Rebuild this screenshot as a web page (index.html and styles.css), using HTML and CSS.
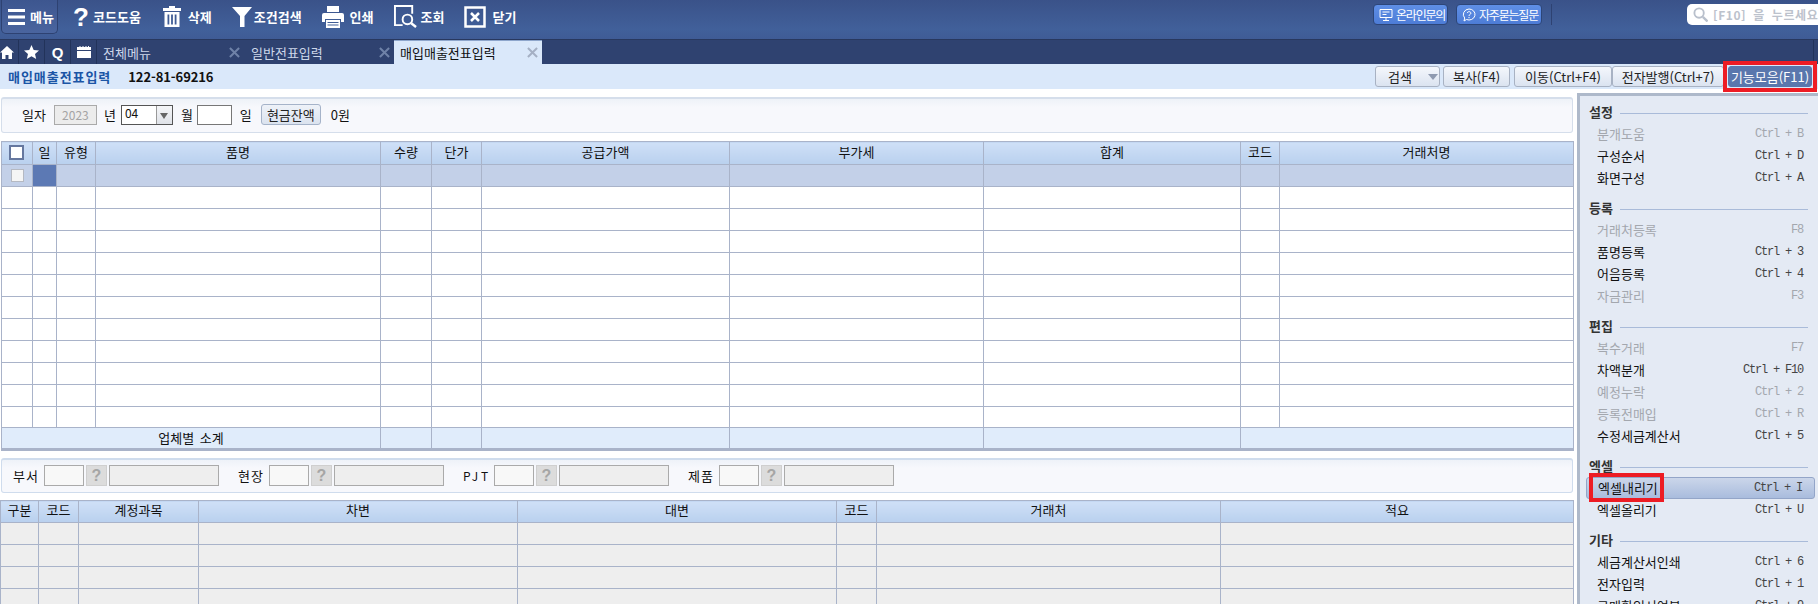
FILE: index.html
```html
<!DOCTYPE html>
<html lang="ko">
<head>
<meta charset="utf-8">
<title>매입매출전표입력</title>
<link rel="stylesheet" href="styles.css">
</head>
<body>
<header class="toolbar">
  <button class="menu-btn"><svg class="ic-ham" viewBox="0 0 17 16"><path d="M0 0h17v3H0zM0 6.500h17v3H0zM0 13h17v3H0z"/></svg><span>메뉴</span></button>
  <nav class="tools">
    <a class="tool tool-help"><span class="qmark">?</span><span>코드도움</span></a>
    <a class="tool"><svg class="ic-trash" viewBox="0 0 18 21"><path d="M6 0h6v2h6v3H0V2h6zM1.500 6h15v15h-15zM4.500 8.500v10h1.800v-10zM8.100 8.500v10h1.800v-10zM11.700 8.500v10h1.800v-10z" fill-rule="evenodd"/></svg><span>삭제</span></a>
    <a class="tool tool-narrow"><svg class="ic-funnel" viewBox="0 0 20 20"><path d="M0 0h20l-7.500 9v11h-4.500V9z"/></svg><span>조건검색</span></a>
    <a class="tool tool-print"><svg class="ic-print" viewBox="0 0 22 22"><path d="M5 0h12v6H5zM2 7h18a2 2 0 0 1 2 2v7h-3v-3H3v3H0V9a2 2 0 0 1 2-2zM4 14h14v8H4zM5.500 16v1h11v-1zM5.500 18.500v1h11v-1z" fill-rule="evenodd"/></svg><span>인쇄</span></a>
    <a class="tool tool-find"><svg class="ic-find" viewBox="0 0 24 24"><path d="M9 21H1V1h18v8" fill="none" stroke="#fff" stroke-width="2"/><circle cx="14" cy="15" r="5" fill="none" stroke="#fff" stroke-width="2"/><path d="M18 19l5 4" stroke="#fff" stroke-width="2.500"/></svg><span>조회</span></a>
    <a class="tool tool-print"><svg class="ic-close" viewBox="0 0 22 22"><path d="M1.500 1.500h19v19h-19z" fill="none" stroke="#fff" stroke-width="2.500"/><path d="M7 7l8 8M15 7l-8 8" stroke="#fff" stroke-width="2.500"/></svg><span>닫기</span></a>
  </nav>
  <div class="top-right">
    <a class="pill pill-a"><svg class="ic-pill" viewBox="0 0 14 14"><path d="M1 1.500h12v8H1zM7 9.500v2.500M4 12.500h6M3.500 4h7M3.500 6.500h4" fill="none" stroke="#fff"/></svg><span>온라인문의</span></a>
    <a class="pill"><svg class="ic-pill" viewBox="0 0 14 14"><path d="M7 1a6 5.500 0 1 1-2.500 10.500L2 13l.7-3A6 5.500 0 0 1 7 1z" fill="none" stroke="#fff"/><path d="M5.300 5a1.800 1.500 0 1 1 2.600 1.500c-.6.400-.9.700-.9 1.500M7 9v1.200" fill="none" stroke="#fff"/></svg><span>자주묻는질문</span></a>
    <span class="top-div"></span>
    <div class="global-search"><svg class="ic-mag" viewBox="0 0 16 16"><circle cx="6.500" cy="6.500" r="5" fill="none" stroke="#b9c0cc" stroke-width="2"/><path d="M10.500 10.500l5 5" stroke="#b9c0cc" stroke-width="2.500"/></svg><span>[F10] 을 누르세요</span></div>
  </div>
</header>

<div class="tabbar">
  <a class="tab-ic ti-1"><svg class="ic-home" viewBox="0 0 14 13"><path d="M7 0l7 6.500h-2V13H8.500V9h-3v4H2V6.500H0z"/></svg></a>
  <a class="tab-ic"><svg class="ic-star" viewBox="0 0 15 14"><path d="M7.500 0l2.200 4.900 5.300.5-4 3.500 1.200 5.100-4.700-2.700L2.800 14 4 8.900 0 5.400l5.300-.5z"/></svg></a>
  <a class="tab-ic tab-q">Q</a>
  <a class="tab-ic"><svg class="ic-cal" viewBox="0 0 14 12"><path d="M0 1h2.500V0h1v1h2V0h1v1h2V0h1v1h1.500V0h1v1H14v3H0zM0 5h14v7H0z"/></svg></a>
  <div class="tab tab-all"><span>전체메뉴</span><svg class="x" viewBox="0 0 12 12"><path d="M1 1l10 10M11 1L1 11"/></svg></div>
  <div class="tab tab-gen"><span>일반전표입력</span><svg class="x" viewBox="0 0 12 12"><path d="M1 1l10 10M11 1L1 11"/></svg></div>
  <div class="tab tab-on"><span>매입매출전표입력</span><svg class="x" viewBox="0 0 12 12"><path d="M1 1l10 10M11 1L1 11"/></svg></div>
  <span class="tab-end"></span>
</div>

<div class="subhead">
  <strong class="page-title">매입매출전표입력</strong>
  <strong class="biz-no">122-81-69216</strong>
  <div class="sub-actions">
    <button class="sbtn sbtn-search"><span>검색</span><i class="tri"></i></button>
    <button class="sbtn sbtn-copy">복사(F4)</button>
    <button class="sbtn sbtn-move">이동(Ctrl+F4)</button>
    <button class="sbtn sbtn-issue">전자발행(Ctrl+7)</button>
    <button class="sbtn sbtn-all">기능모음(F11)<i class="red-mark"></i></button>
  </div>
</div>

<main class="body">
  <section class="work">
    <div class="panel filter">
      <label class="lb-date">일자</label>
      <span class="inp inp-year">2023</span>
      <label class="lb-y">년</label>
      <span class="sel"><span class="sel-v">04</span><i class="sel-a"></i></span>
      <label class="lb-m">월</label>
      <span class="inp inp-day"></span>
      <label class="lb-d">일</label>
      <button class="cash">현금잔액</button>
      <span class="cash-v">0원</span>
    </div>

    <table class="grid grid-top">
      <colgroup><col class="a1"><col class="a2"><col class="a3"><col class="a4"><col class="a5"><col class="a6"><col class="a7"><col class="a8"><col class="a9"><col class="a10"><col class="a11"></colgroup>
      <thead><tr><th><i class="chk-h"></i></th><th>일</th><th>유형</th><th>품명</th><th>수량</th><th>단가</th><th>공급가액</th><th>부가세</th><th>합계</th><th>코드</th><th>거래처명</th></tr></thead>
      <tbody>
        <tr class="sel-row"><td><i class="chk"></i></td><td class="cur"></td><td></td><td></td><td></td><td></td><td></td><td></td><td></td><td></td><td></td></tr>
        <tr><td></td><td></td><td></td><td></td><td></td><td></td><td></td><td></td><td></td><td></td><td></td></tr>
        <tr><td></td><td></td><td></td><td></td><td></td><td></td><td></td><td></td><td></td><td></td><td></td></tr>
        <tr><td></td><td></td><td></td><td></td><td></td><td></td><td></td><td></td><td></td><td></td><td></td></tr>
        <tr><td></td><td></td><td></td><td></td><td></td><td></td><td></td><td></td><td></td><td></td><td></td></tr>
        <tr><td></td><td></td><td></td><td></td><td></td><td></td><td></td><td></td><td></td><td></td><td></td></tr>
        <tr><td></td><td></td><td></td><td></td><td></td><td></td><td></td><td></td><td></td><td></td><td></td></tr>
        <tr><td></td><td></td><td></td><td></td><td></td><td></td><td></td><td></td><td></td><td></td><td></td></tr>
        <tr><td></td><td></td><td></td><td></td><td></td><td></td><td></td><td></td><td></td><td></td><td></td></tr>
        <tr><td></td><td></td><td></td><td></td><td></td><td></td><td></td><td></td><td></td><td></td><td></td></tr>
        <tr><td></td><td></td><td></td><td></td><td></td><td></td><td></td><td></td><td></td><td></td><td></td></tr>
        <tr class="short-row"><td></td><td></td><td></td><td></td><td></td><td></td><td></td><td></td><td></td><td></td><td></td></tr>
        <tr class="sum-row"><td colspan="4">업체별 소계</td><td></td><td></td><td></td><td></td><td></td><td colspan="2"></td></tr>
      </tbody>
    </table>

    <div class="panel refs">
      <label class="r-lb r-lb1">부서</label><span class="r-in"></span><span class="r-q">?</span><span class="r-wide"></span>
      <label class="r-lb">현장</label><span class="r-in"></span><span class="r-q">?</span><span class="r-wide"></span>
      <label class="r-lb r-lb3">PJT</label><span class="r-in"></span><span class="r-q">?</span><span class="r-wide"></span>
      <label class="r-lb">제품</label><span class="r-in"></span><span class="r-q">?</span><span class="r-wide"></span>
    </div>

    <table class="grid grid-bottom">
      <colgroup><col class="b1"><col class="b2"><col class="b3"><col class="b4"><col class="b5"><col class="b6"><col class="b7"><col class="b8"></colgroup>
      <thead><tr><th>구분</th><th>코드</th><th>계정과목</th><th>차변</th><th>대변</th><th>코드</th><th>거래처</th><th>적요</th></tr></thead>
      <tbody>
        <tr><td></td><td></td><td></td><td></td><td></td><td></td><td></td><td></td></tr>
        <tr><td></td><td></td><td></td><td></td><td></td><td></td><td></td><td></td></tr>
        <tr><td></td><td></td><td></td><td></td><td></td><td></td><td></td><td></td></tr>
        <tr><td></td><td></td><td></td><td></td><td></td><td></td><td></td><td></td></tr>
      </tbody>
    </table>
  </section>

  <aside class="func">
    <h3 class="fh"><span>설정</span><i></i></h3>
    <div class="fi off"><span>분개도움</span><kbd>Ctrl + B</kbd></div>
    <div class="fi"><span>구성순서</span><kbd>Ctrl + D</kbd></div>
    <div class="fi"><span>화면구성</span><kbd>Ctrl + A</kbd></div>
    <h3 class="fh"><span>등록</span><i></i></h3>
    <div class="fi off"><span>거래처등록</span><kbd>F8</kbd></div>
    <div class="fi"><span>품명등록</span><kbd>Ctrl + 3</kbd></div>
    <div class="fi"><span>어음등록</span><kbd>Ctrl + 4</kbd></div>
    <div class="fi off"><span>자금관리</span><kbd>F3</kbd></div>
    <h3 class="fh"><span>편집</span><i></i></h3>
    <div class="fi off"><span>복수거래</span><kbd>F7</kbd></div>
    <div class="fi"><span>차액분개</span><kbd>Ctrl + F10</kbd></div>
    <div class="fi off"><span>예정누락</span><kbd>Ctrl + 2</kbd></div>
    <div class="fi off"><span>등록전매입</span><kbd>Ctrl + R</kbd></div>
    <div class="fi"><span>수정세금계산서</span><kbd>Ctrl + 5</kbd></div>
    <h3 class="fh"><span>엑셀</span><i></i></h3>
    <div class="fi hot"><span>엑셀내리기</span><kbd>Ctrl + I</kbd><i class="red-box"></i></div>
    <div class="fi"><span>엑셀올리기</span><kbd>Ctrl + U</kbd></div>
    <h3 class="fh"><span>기타</span><i></i></h3>
    <div class="fi"><span>세금계산서인쇄</span><kbd>Ctrl + 6</kbd></div>
    <div class="fi"><span>전자입력</span><kbd>Ctrl + 1</kbd></div>
    <div class="fi"><span>구매확인서여부</span><kbd>Ctrl + 9</kbd></div>
  </aside>
</main>
</body>
</html>
```

FILE: styles.css
```css
* { box-sizing: border-box; }
html, body { margin: 0; padding: 0; height: 604px; overflow: hidden; background: #fff; }
body { font-family: "Noto Sans CJK KR", "Noto Sans", sans-serif; font-size: 13px; color: #111; line-height: 1; }
button { font: inherit; padding: 0; margin: 0; }
i { font-style: normal; }
svg { display: block; flex: none; fill: #fff; }

/* toolbar */
.toolbar { height: 40px; display: flex; align-items: flex-start; background: linear-gradient(#3a5289, #41609a 75%, #3f5b95); border-bottom: 1px solid #28385f; color: #fff; }
.menu-btn { width: 57px; height: 34px; margin-left: 1px; display: flex; align-items: center; gap: 5px; padding: 0 0 0 6px; color: #fff; font-weight: 700; font-size: 13px; border: 1px solid #2e4272; border-top: 0; border-radius: 0 0 5px 5px; background: linear-gradient(#3d568f, #4a659f); }
.ic-ham { width: 17px; height: 16px; }
.tools { display: flex; margin-left: 15px; gap: 20px; height: 33px; align-items: center; }
.tool { display: flex; align-items: center; gap: 7px; font-weight: 700; font-size: 13px; }
.tool-narrow { gap: 2px; }
.tool-print { gap: 6px; }
.tool-find { gap: 4px; }
.tool-help { gap: 6px; margin-right: 2px; }
.qmark { font-family: "Liberation Sans", sans-serif; font-size: 26px; width: 14px; text-align: center; }
.ic-trash { width: 18px; height: 21px; }
.ic-funnel { width: 20px; height: 20px; }
.ic-print { width: 22px; height: 22px; }
.ic-find { width: 23px; height: 23px; }
.ic-close { width: 22px; height: 22px; }
.top-right { margin-left: auto; height: 30px; padding-top: 4px; display: flex; align-items: flex-start; }
.pill { height: 21px; width: 86px; display: flex; align-items: center; gap: 3px; padding-left: 5px; border: 1px solid #2d4679; border-radius: 4px; background: linear-gradient(#5f8fe6, #4d7cd6); font-size: 12px; color: #fff; }
.pill span { letter-spacing: -1.2px; white-space: nowrap; }
.pill-a { width: 75px; margin-right: 8px; }
.ic-pill { width: 14px; height: 14px; fill: none; }
.top-div { width: 1px; height: 21px; margin-left: 9px; margin-right: 135px; background: #2e4272; }
.global-search { width: 131px; height: 21px; display: flex; align-items: center; gap: 5px; padding-left: 6px; border-radius: 5px 0 0 5px; background: #fff; color: #bcc2cc; font-weight: 700; font-size: 12px; letter-spacing: .6px; word-spacing: 3px; white-space: nowrap; overflow: hidden; }
.ic-mag { width: 15px; height: 15px; fill: none; }

/* tabs */
.tabbar { height: 24px; display: flex; align-items: stretch; background: #2f4270; color: #fff; }
.tab-ic { width: 26px; display: flex; align-items: center; justify-content: center; border-right: 1px solid #22335a; }
.ti-1 { width: 19px; justify-content: flex-start; }
.ic-home { width: 14px; height: 13px; }
.ic-star { width: 15px; height: 14px; }
.ic-cal { width: 14px; height: 12px; }
.tab-q { font-family: "Liberation Sans", sans-serif; font-weight: 700; font-size: 15px; }
.tab { display: flex; align-items: center; justify-content: space-between; color: #cdd7ea; }
.tab-all { width: 146px; padding: 0 3px 0 6px; }
.tab-gen { width: 151px; padding: 0 4px 0 8px; }
.tab-on { width: 148px; padding: 0 4px 0 6px; color: #111; background: #dae8fa; border-top: 1px solid #8ea6cc; }
.x { width: 11px; height: 11px; fill: none; stroke: #6f82a8; stroke-width: 2.200; }
.tab-on .x { stroke: #a5b0c4; }
.tab-end { width: 1px; margin-left: auto; margin-right: 4px; background: #22335a; }

/* sub header */
.subhead { height: 25px; display: flex; align-items: center; padding-left: 8px; background: #dae8fa; }
.page-title { color: #1b55a6; font-size: 13px; letter-spacing: .95px; }
.biz-no { margin-left: 17px; color: #111; font-size: 13px; letter-spacing: -.1px; }
.sub-actions { margin-left: auto; margin-right: 6px; display: flex; align-self: flex-start; padding-top: 2px; }
.sbtn { height: 21px; border: 1px solid #a8b2c3; border-radius: 3px; background: linear-gradient(#f4f7fc, #dbe3f0); color: #222; white-space: nowrap; font-size: 13px; position: relative; }
.sbtn-search { width: 65px; margin-right: 3px; display: flex; align-items: center; padding-left: 12px; }
.tri { margin-left: 16px; border: 5px solid transparent; border-top: 6px solid #8f9ab0; border-bottom: 0; }
.sbtn-copy { width: 67px; margin-right: 4px; }
.sbtn-move { width: 98px; }
.sbtn-issue { width: 112px; margin-right: 4px; }
.sbtn-all { width: 84px; color: #fff; background: #5a77ad; border-color: #5a77ad; }
.red-mark { position: absolute; top: -6px; left: -6px; right: -6px; bottom: -6px; border: 4px solid #ed1c24; pointer-events: none; }

/* body */
.body { display: flex; height: 515px; }
.work { width: 1573px; flex: none; padding-top: 8px; }
.panel { height: 36px; margin-left: 1px; display: flex; align-items: center; padding-bottom: 2px; background: linear-gradient(#eef2f8, #f7f8fc 25%, #f7f8fc); border: 1px solid #d5deeb; border-top: 2px solid #d5deeb; border-radius: 3px; }
.inp { display: block; height: 20px; border: 1px solid #8f8f8f; background: #fff; }
.lb-date { margin-left: 20px; }
.inp-year { width: 43px; margin-left: 8px; background: #ececec; color: #a4a4a4; font-size: 12px; text-align: center; line-height: 18px; border-color: #aaa; }
.lb-y { margin-left: 7px; }
.sel { width: 52px; height: 20px; margin-left: 5px; display: flex; border: 1px solid #555; background: #fff; font-size: 12px; }
.sel-v { flex: 1; padding: 1px 0 0 3px; }
.sel-a { width: 16px; border-left: 1px solid #999; background: linear-gradient(to bottom, #f5f6f8, #dfe2e8); position: relative; }
.sel-a::after { content: ""; position: absolute; left: 3px; top: 7px; border: 4px solid transparent; border-top: 6px solid #666; border-bottom: 0; }
.lb-m { margin-left: 8px; }
.inp-day { width: 35px; margin-left: 4px; border-color: #777; }
.lb-d { margin-left: 8px; }
.cash { width: 60px; height: 21px; margin-left: 9px; border: 1px solid #a5b3c9; border-radius: 3px; background: linear-gradient(#eef2f8, #dbe3ef); color: #222; white-space: nowrap; font-size: 13px; }
.cash-v { margin-left: 10px; font-size: 13px; }

.grid { table-layout: fixed; border-collapse: collapse; }
.grid th { height: 22px; padding: 0 0 4px; font-weight: 400; font-size: 13px; background: linear-gradient(#cfe0f7, #b9d0ee); border: 1px solid #a9b3c9; white-space: nowrap; }
.grid td { height: 22px; padding: 0; border: 1px solid #a9b3c9; }
.grid-top { width: 1572px; margin: 8px 0 0 1px; }
.a1 { width: 31px; } .a2 { width: 24px; } .a3 { width: 39px; } .a4 { width: 285px; } .a5 { width: 51px; } .a6 { width: 50px; }
.a7 { width: 248px; } .a8 { width: 254px; } .a9 { width: 257px; } .a10 { width: 39px; } .a11 { width: 294px; }
.chk-h { display: block; width: 15px; height: 15px; margin: 3px 0 0 7px; background: #fff; border: 2px solid #66789f; }
.chk { display: block; width: 13px; height: 13px; margin-left: 9px; background: #f5f5f5; border: 1px solid #b5b9c2; }
.sel-row td { background: #c3d0e8; }
.sel-row td.cur { background: #5c79b4; }
.grid-top .short-row td { height: 21px; }
.sum-row td { background: #e0ecfb; text-align: center; font-size: 13px; word-spacing: 2px; border-bottom: 3px solid #a9b3c9; padding-bottom: 2px; }

.refs { margin-top: 7px; height: 35px; padding-bottom: 1px; border-color: #cfdced; }
.r-lb { margin-left: 19px; width: 31px; letter-spacing: 1px; white-space: nowrap; font-size: 13px; }
.r-lb1 { margin-left: 11px; }
.r-lb3 { letter-spacing: 3px; font-size: 12px; }
.r-in { width: 40px; height: 21px; background: #f8f8f8; border: 1px solid #aaa; }
.r-q { width: 21px; height: 21px; margin: 0 2px; background: #dcdcdc; border: 1px solid #cfcfcf; color: #a6a6a6; font: 700 16px/19px "Liberation Sans", sans-serif; text-align: center; }
.r-wide { width: 110px; height: 21px; background: #eee; border: 1px solid #aaa; }

.grid-bottom { width: 1573px; margin-top: 7px; }
.grid-bottom td { background: #eee; }
.b1 { width: 38px; } .b2 { width: 40px; } .b3 { width: 120px; } .b4 { width: 319px; } .b5 { width: 319px; } .b6 { width: 40px; } .b7 { width: 344px; } .b8 { width: 353px; }

/* function menu */
.func { margin: 4px 0 0 4px; flex: 1; padding: 7px 10px 0 9px; background: #e4eaf4; border-left: 3px solid #aeb9ca; border-top: 3px solid #aeb9ca; }
.fh { height: 20px; margin: 10px 0 0; display: flex; align-items: center; gap: 7px; font-size: 13px; font-weight: 700; color: #333; }
.fh span { padding-bottom: 4px; }
.fh:first-child { margin-top: 0; }
.fh i { flex: 1; height: 1px; background: #a9bbd9; }
.fi { height: 22px; display: flex; align-items: center; justify-content: space-between; padding: 0 5px 0 8px; position: relative; }
.fi span { padding-bottom: 2px; }
.fi.off { color: #a3a7ae; }
kbd { font-family: "Liberation Mono", monospace; font-size: 12px; letter-spacing: -1.2px; color: #444; }
.fi.off kbd { color: #a3a7ae; }
.fi.hot { margin: 0 -7px 0 -3px; padding: 0 12px 0 11px; border: 1px solid #93a5c8; border-radius: 3px; background: linear-gradient(#cbd6ea, #a9bcdd); }
.red-box { position: absolute; left: 2px; top: -5px; width: 75px; height: 29px; border: 4px solid #ed1c24; }
```
